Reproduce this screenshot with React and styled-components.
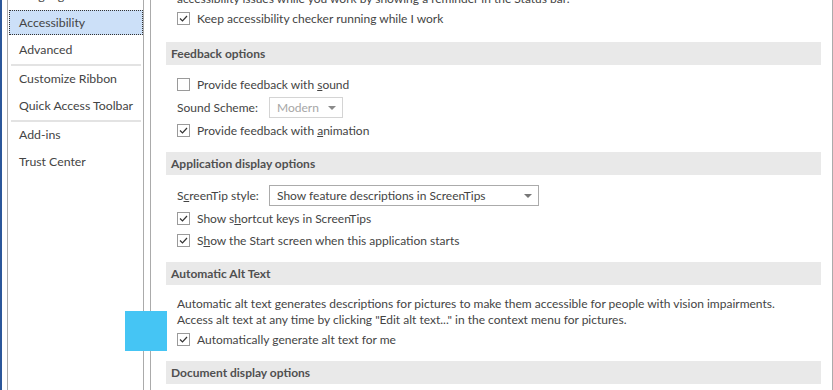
import React from 'react';
import styled, { createGlobalStyle } from 'styled-components';

const GlobalStyle = createGlobalStyle`
  html, body {
    margin: 0;
    padding: 0;
    background: #fff;
  }
  body {
    font-family: Lato, "Open Sans", sans-serif;
    color: #444;
  }
`;

const Frame = styled.div`
  position: relative;
  display: flex;
  width: 833px;
  height: 390px;
  box-sizing: border-box;
  overflow: hidden;
  border-left: 2px solid #2b579a;
  background: #fff;
`;

const Nav = styled.nav`
  flex-shrink: 0;
  width: 137px;
  margin-left: 5px;
  box-sizing: border-box;
  border-left: 1px solid #ababab;
  border-right: 1px solid #ababab;
  overflow: hidden;
`;

const NavList = styled.ul`
  list-style: none;
  margin: -17px 0 0;
  padding: 0;
`;

const NavItem = styled.li`
  display: flex;
  align-items: center;
  height: 25px;
  margin: 0 0 2px 1px;
  padding-left: 9px;
  box-sizing: border-box;
  font-size: 12.3px;
  color: #444;
  white-space: nowrap;
  background: ${(p) => (p.$active ? '#cce0f8' : 'transparent')};
  border: 1px ${(p) => (p.$active ? 'dotted #333' : 'solid transparent')};
`;

const NavSeparator = styled.li`
  height: 2px;
  margin: 0 2px 0 3px;
  background: #e3e3e3;
`;

const Panel = styled.main`
  flex: 1;
  margin-left: 6px;
  border-left: 1px solid #ababab;
  border-right: 1px solid #ababab;
  overflow: hidden;
`;

const Scroll = styled.div`
  margin-top: -9px;
  padding: 0 11px 0 15px;
`;

const SectionHeader = styled.div`
  display: flex;
  align-items: center;
  height: 23px;
  padding-left: 5px;
  background: #e9e9e9;
  font-size: 12px;
  font-weight: 700;
  color: #505050;
`;

const SectionBody = styled.div`
  padding: ${(p) => (p.$first ? '0' : '8px')} 0 ${(p) => (p.$first ? '13px' : '11px')} 11px;
`;

const Row = styled.div`
  display: flex;
  align-items: center;
  height: ${(p) => p.$h || 22}px;
  font-size: 12px;
  white-space: nowrap;
`;

const Box = styled.span`
  display: inline-flex;
  align-items: center;
  justify-content: center;
  width: 13px;
  height: 13px;
  box-sizing: border-box;
  border: 1px solid #9a9a9a;
  background: #fff;
  margin-right: 7px;
  flex-shrink: 0;
`;

const FieldLabel = styled.span`
  width: 92px;
  flex-shrink: 0;
`;

const SelectBox = styled.div`
  position: relative;
  display: flex;
  align-items: center;
  width: ${(p) => p.$w}px;
  height: 21px;
  box-sizing: border-box;
  padding-left: 7px;
  border: 1px solid ${(p) => (p.$disabled ? '#d4d4d4' : '#ababab')};
  color: ${(p) => (p.$disabled ? '#a6a6a6' : '#444')};
  background: #fff;
`;

const Arrow = styled.svg`
  position: absolute;
  right: 6px;
  top: 8px;
`;

const Para = styled.p`
  margin: ${(p) => (p.$tight ? 0 : '3px')} 0 0;
  font-size: 12px;
  line-height: 16px;
  white-space: nowrap;
`;

const Marker = styled.div`
  position: absolute;
  left: 123px;
  top: 311px;
  width: 42px;
  height: 40px;
  background: #45c5f4;
`;

function Check({ checked, children }) {
  return (
    <Row>
      <Box>
        {checked && (
          <svg width="9" height="7" viewBox="0 0 9 7">
            <polyline points="1,3.5 3.5,6 8,1" fill="none" stroke="#333" strokeWidth="1.2" />
          </svg>
        )}
      </Box>
      <span>{children}</span>
    </Row>
  );
}

function Select({ label, value, width, disabled }) {
  return (
    <Row $h={24}>
      <FieldLabel>{label}</FieldLabel>
      <SelectBox $w={width} $disabled={disabled}>
        {value}
        <Arrow width="8" height="4" viewBox="0 0 8 4">
          <polygon points="0,0 8,0 4,4" fill={disabled ? '#8a8a8a' : '#777'} />
        </Arrow>
      </SelectBox>
    </Row>
  );
}

const navItems = [
  'Language',
  'Accessibility',
  'Advanced',
  '-',
  'Customize Ribbon',
  'Quick Access Toolbar',
  '-',
  'Add-ins',
  'Trust Center',
];

export default function App() {
  return (
    <>
      <GlobalStyle />
      <Frame>
        <Nav>
          <NavList>
            {navItems.map((item, i) =>
              item === '-' ? (
                <NavSeparator key={i} />
              ) : (
                <NavItem key={i} $active={item === 'Accessibility'}>
                  {item}
                </NavItem>
              )
            )}
          </NavList>
        </Nav>
        <Panel>
          <Scroll>
            <SectionBody $first>
              <Para $tight>
                accessibility issues while you work by showing a reminder in the Status bar.
              </Para>
              <Check checked>Keep accessibility checker running while I work</Check>
            </SectionBody>

            <SectionHeader>Feedback options</SectionHeader>
            <SectionBody>
              <Check>
                Provide feedback with <u>s</u>ound
              </Check>
              <Select label="Sound Scheme:" value="Modern" width={74} disabled />
              <Check checked>
                Provide feedback with <u>a</u>nimation
              </Check>
            </SectionBody>

            <SectionHeader>Application display options</SectionHeader>
            <SectionBody>
              <Select
                label={
                  <>
                    S<u>c</u>reenTip style:
                  </>
                }
                value="Show feature descriptions in ScreenTips"
                width={270}
              />
              <Check checked>
                Show s<u>h</u>ortcut keys in ScreenTips
              </Check>
              <Check checked>
                S<u>h</u>ow the Start screen when this application starts
              </Check>
            </SectionBody>

            <SectionHeader>Automatic Alt Text</SectionHeader>
            <SectionBody>
              <Para>
                Automatic alt text generates descriptions for pictures to make them accessible for
                people with vision impairments.
              </Para>
              <Para $tight>
                Access alt text at any time by clicking "Edit alt text..." in the context menu for
                pictures.
              </Para>
              <Check checked>
                Automatically <u>g</u>enerate alt text for me
              </Check>
            </SectionBody>

            <SectionHeader>Document display options</SectionHeader>
          </Scroll>
        </Panel>
        <Marker />
      </Frame>
    </>
  );
}
